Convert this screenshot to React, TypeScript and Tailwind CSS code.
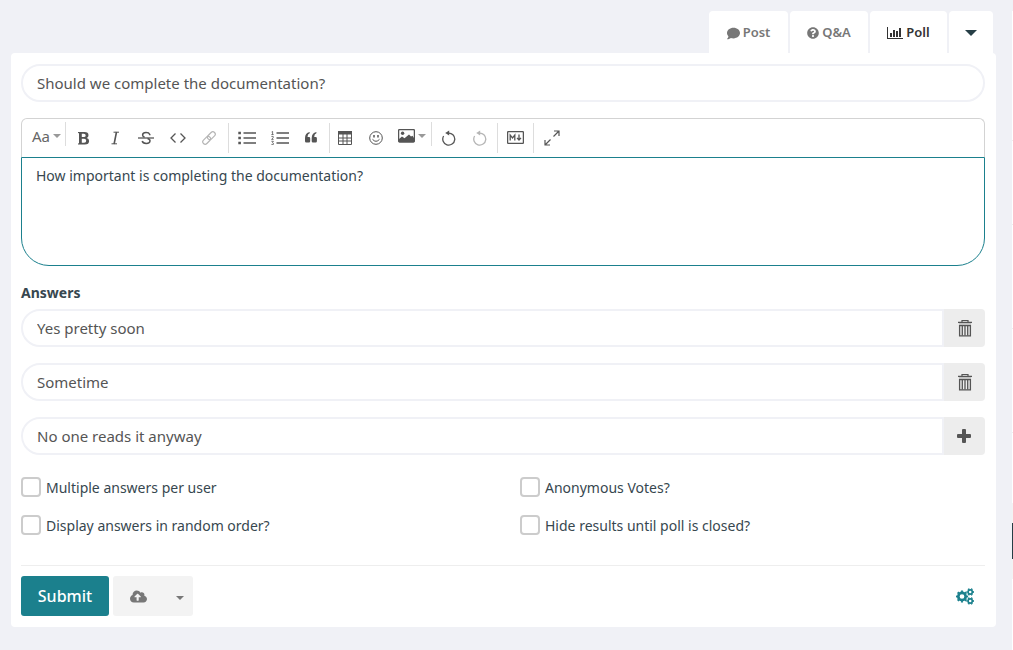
import React, { useState } from "react";
import { FaComment, FaQuestionCircle, FaCloudUploadAlt } from "react-icons/fa";

function Sep({ short = false }: { short?: boolean }) {
  return <span className={short ? "mb-2 h-6 w-px shrink-0 bg-[#ddd]" : "h-[30px] w-px shrink-0 bg-[#ddd]"} />;
}

function Caret() {
  return <span className="border-x-4 border-t-4 border-x-transparent border-t-[#999]" />;
}

function Tool({ label, children, disabled }: { label: string; children: React.ReactNode; disabled?: boolean }) {
  return (
    <button
      type="button"
      aria-label={label}
      disabled={disabled}
      className="flex h-7 w-[31px] shrink-0 items-center justify-center text-[#555] disabled:text-[#b5b5b5]"
    >
      {children}
    </button>
  );
}

const stroke = { fill: "none", stroke: "currentColor", strokeWidth: 1.3 };

function BarChart() {
  return (
    <svg width="16" height="14" viewBox="0 0 16 14" fill="currentColor" aria-hidden="true">
      <path d="M0 1h1v11h15v1H0zM3 7h2v4H3zM6 4h2v7H6zM9 5h2v6H9zM12 2h2v9h-2z" />
    </svg>
  );
}

function Trash() {
  return (
    <svg width="16" height="18" viewBox="0 0 16 18" aria-hidden="true">
      <path d="M5 3.5V1.5h6v2" fill="none" stroke="#555" strokeWidth="1.2" />
      <path d="M1 3.4h14" stroke="#555" strokeWidth="1.3" />
      <path d="M2 4h12v2H2z" fill="#c2c2c2" />
      <path d="M2.6 6.6h10.8v10.3H2.6z" fill="none" stroke="#555" strokeWidth="1.3" />
      <path d="M5.3 7v9.5M8 7v9.5M10.7 7v9.5" stroke="#555" strokeWidth="1.3" />
    </svg>
  );
}

function Plus() {
  return (
    <svg width="15" height="14" viewBox="0 0 15 14" fill="#555" aria-hidden="true">
      <path d="M6 0h2q1 0 1 1v4h4q1 0 1 1v2q0 1-1 1H9v4q0 1-1 1H6q-1 0-1-1V9H1q-1 0-1-1V6q0-1 1-1h4V1q0-1 1-1z" />
    </svg>
  );
}

function Gears() {
  return (
    <svg width="19" height="18" viewBox="0 0 19 18" fill="none" stroke="currentColor" aria-hidden="true">
      <circle cx="6" cy="9.500" r="3.700" strokeWidth="2.700" />
      <circle cx="6" cy="9.500" r="5.300" strokeWidth="1.600" pathLength="16" strokeDasharray="1 1" strokeDashoffset=".5" />
      <circle cx="14.200" cy="5" r="2.100" strokeWidth="1.700" />
      <circle cx="14.200" cy="5" r="3.200" strokeWidth="1.100" pathLength="12" strokeDasharray="1 1" strokeDashoffset=".5" />
      <circle cx="14.200" cy="14" r="2.100" strokeWidth="1.700" />
      <circle cx="14.200" cy="14" r="3.200" strokeWidth="1.100" pathLength="12" strokeDasharray="1 1" strokeDashoffset=".5" />
    </svg>
  );
}

function Rewind() {
  return (
    <svg width="16" height="16" viewBox="0 0 16 16" {...stroke} aria-hidden="true">
      <path d="M7 3.1A6 6 0 1 1 2.6 6" />
      <path d="M4.2 3.1L8.2.4v5.2z" fill="currentColor" stroke="none" />
    </svg>
  );
}

function Toolbar() {
  return (
    <div role="toolbar" aria-label="Formatting" className="flex h-[39px] items-center rounded-t-md border border-b-0 border-[#d3d3d3] pb-px">
      <button type="button" aria-label="Text style" className="mb-1 flex w-[43px] shrink-0 items-center gap-[3px] pl-[10px] text-[15px] leading-5 text-[#666]">
        Aa <Caret />
      </button>
      <Sep short />
      <span className="w-[2px]" />
      <Tool label="Bold">
        <svg width="12" height="14" viewBox="0 0 12 14" aria-hidden="true">
          <path fillRule="evenodd" fill="currentColor" d="M0 1h6.5q4 0 4 3.2 0 2-1.8 2.7 2.4.6 2.4 3.1 0 3.5-4.3 3.5H0v-1l1-.3V2.2L0 2zM3.8 2.8v3.3h2q1.9 0 1.9-1.7 0-1.6-1.9-1.6zm0 5v3.9h2.3q2.1 0 2.1-2 0-1.9-2.1-1.9z" />
        </svg>
      </Tool>
      <Tool label="Italic">
        <svg width="10" height="14" viewBox="0 0 10 14" {...stroke} aria-hidden="true">
          <path d="M3.500 1.200H9M1.500 12.800H7" strokeWidth="1" />
          <path d="M6.500 1L4.100 13" strokeWidth="1.600" />
        </svg>
      </Tool>
      <Tool label="Strikethrough">
        <svg width="16" height="14" viewBox="0 0 16 14" {...stroke} aria-hidden="true">
          <path d="M0 7h16" />
          <path d="M11.8 4.200V3.500Q11 1.600 8 1.600 4.600 1.600 4.600 3.900q0 1.500 2 2.300M9.500 7.400q2.500.6 2.500 2.400 0 2.600-3.800 2.600-3.500 0-4-2.400" strokeWidth="1.500" />
        </svg>
      </Tool>
      <span className="w-px" />
      <Tool label="Code">
        <svg width="16" height="12" viewBox="0 0 16 12" {...stroke} aria-hidden="true">
          <path d="M5.5 1.5L1 6l4.5 4.5M10.5 1.5L15 6l-4.5 4.5" />
        </svg>
      </Tool>
      <Tool label="Link" disabled>
        <svg width="14" height="14" viewBox="0 0 14 14" {...stroke} strokeWidth="1.2" aria-hidden="true">
          <g transform="rotate(-45 7 7)">
            <rect x="-.8" y="4.6" width="9" height="4.800" rx="2.400" />
            <rect x="5.800" y="4.600" width="9" height="4.800" rx="2.400" />
          </g>
        </svg>
      </Tool>
      <span className="w-1" />
      <Sep />
      <span className="w-[2px]" />
      <Tool label="Bullet list">
        <svg width="18" height="14" viewBox="0 0 18 14" {...stroke} aria-hidden="true">
          <path d="M5.5 2H18M5.5 7H18M5.5 12H18" />
          <path d="M.3 2h2.6M.3 7h2.6M.3 12h2.6" strokeWidth="2.6" />
        </svg>
      </Tool>
      <span className="w-[2px]" />
      <Tool label="Numbered list">
        <svg width="18" height="14" viewBox="0 0 18 14" {...stroke} aria-hidden="true">
          <path d="M5.5 2H18M5.5 7H18M5.5 12H18" />
          <path d="M.6 1l1-.6v3M.4 3.5h2.2M.4 5.4h1.8v1.3l-1.6 1.7h2M.4 10.3h2L1.5 11.5l.9.7v1.2h-2" strokeWidth=".8" />
        </svg>
      </Tool>
      <Tool label="Quote">
        <svg width="12" height="11" viewBox="0 0 12 11" fill="currentColor" aria-hidden="true">
          <path d="M4.7 0v1.2Q2.5 2 2.5 5H4q1.2 0 1.2 1.2v3Q5.200 10.500 4 10.500H1.300Q0 10.500 0 9.200V6Q0 .8 4.700 0zM11.400 0v1.200Q9.200 2 9.200 5h1.500q1.200 0 1.200 1.200v3q0 1.300-1.200 1.300H8q-1.300 0-1.300-1.300V6Q6.700.8 11.400 0z" />
        </svg>
      </Tool>
      <span className="w-[3px]" />
      <Sep />
      <Tool label="Table">
        <svg width="16" height="14" viewBox="0 0 16 14" {...stroke} strokeWidth="1" aria-hidden="true">
          <path d="M.5 1.500h13v12H.5zM0 7h14M0 10h14M5 3v10M9 3v10" />
          <path d="M0 0h14v3.500H0z" fill="currentColor" stroke="none" />
        </svg>
      </Tool>
      <Tool label="Emoji">
        <svg width="16" height="14" viewBox="0 0 16 14" {...stroke} strokeWidth="1" aria-hidden="true">
          <circle cx="7" cy="7" r="6.300" />
          <path d="M3.500 8.300q3.500 4 7 0" />
          <path d="M5 4v2.500M9 4v2.500" strokeWidth="1.500" />
        </svg>
      </Tool>
      <button type="button" aria-label="Insert image" className="mb-1 ml-[6px] flex shrink-0 items-center gap-[3px] text-[#555]">
        <svg width="17" height="14" viewBox="0 0 17 14" aria-hidden="true">
          <rect x=".6" y=".6" width="15.800" height="12.400" rx="1" {...stroke} />
          <circle cx="4.600" cy="4.200" r="1.700" fill="currentColor" />
          <path d="M1 13v-3l3-2.500 2.500 1.800L11 5.500l2 2 1.500-.8L16 9v4z" fill="currentColor" />
        </svg>
        <Caret />
      </button>
      <span className="w-[5px]" />
      <Sep short />
      <span className="w-px" />
      <Tool label="Undo"><Rewind /></Tool>
      <Tool label="Redo" disabled><Rewind /></Tool>
      <span className="w-[2px]" />
      <Sep />
      <span className="w-[2px]" />
      <Tool label="Markdown">
        <svg width="17" height="13" viewBox="0 0 17 13" {...stroke} aria-hidden="true">
          <rect x=".6" y=".6" width="15.800" height="11.800" rx="1" />
          <path d="M3.200 9.500v-5.500l2.300 2.900L7.800 4v5.500M12 3.500v5.500M10 6.900L12 9l2-2.100" strokeWidth="1.300" />
        </svg>
      </Tool>
      <span className="w-[2px]" />
      <Sep />
      <span className="w-[2px]" />
      <Tool label="Full screen">
        <svg width="16" height="16" viewBox="0 0 16 16" {...stroke} strokeWidth="1.200" aria-hidden="true">
          <path d="M9.500 6.500L15 1M10 1h5v5M6.500 9.500L1 15M1 10v5h5" />
        </svg>
      </Tool>
    </div>
  );
}

function Answer({ value, last = false, label }: { value: string; last?: boolean; label: string }) {
  return (
    <div className="flex h-[38px] w-full">
      <input
        aria-label={label}
        defaultValue={value}
        className="min-w-0 flex-1 rounded-l-full border-2 border-[#f0f1f6] bg-white px-[14px] text-[15px] text-[#555] outline-none"
      />
      <button
        type="button"
        aria-label={last ? "Add answer" : "Remove answer"}
        className="flex w-[41px] shrink-0 items-center justify-center rounded-r bg-[#ededed]"
      >
        {last ? <Plus /> : <Trash />}
      </button>
    </div>
  );
}

function Check({ label }: { label: string }) {
  const [on, setOn] = useState(false);
  return (
    <label className="flex h-5 items-start gap-[5px] text-sm leading-[22px] text-[#37474f]">
      <input
        type="checkbox"
        checked={on}
        onChange={() => setOn(!on)}
        className="size-5 shrink-0 appearance-none rounded border-2 border-[#ccc] bg-white checked:border-[#1b808d] checked:bg-[#1b808d]"
      />
      {label}
    </label>
  );
}

const tab = "flex h-[42px] items-center justify-center gap-[3px] rounded-t bg-white pt-0.5 text-[13px] font-semibold";

export default function App() {
  return (
    <div className="flex min-h-screen bg-[#f0f1f6] pt-[11px] font-['Noto_Sans',sans-serif] text-[#37474f]">
      <main className="ml-[11px] mr-4 min-w-0 flex-1">
        <nav aria-label="Content type" className="mr-[3px] flex justify-end gap-[2px]">
          <button type="button" className={`${tab} w-[79px] text-[#777]`}><FaComment size={13} />Post</button>
          <button type="button" className={`${tab} w-[78px] text-[#777]`}><FaQuestionCircle size={12} />Q&amp;A</button>
          <button type="button" className={`${tab} w-[77px] text-[#333]`}><BarChart />Poll</button>
          <button type="button" aria-label="More types" className={`${tab} w-11`}>
            <span className="border-x-6 border-t-6 border-x-transparent border-t-[#263e46]" />
          </button>
        </nav>
        <form onSubmit={(e) => e.preventDefault()} className="rounded bg-white py-[11px] pl-[10px] pr-[11px]">
          <input
            aria-label="Question"
            defaultValue="Should we complete the documentation?"
            className="block h-[38px] w-full rounded-full border-2 border-[#f0f1f6] px-[14px] text-[15px] text-[#555] outline-none"
          />
          <div className="mt-4">
            <Toolbar />
            <textarea
              aria-label="Description"
              defaultValue="How important is completing the documentation?"
              className="block h-[109px] w-full resize-none rounded-b-[28px] border border-[#1b808d] px-[14px] py-[7px] text-sm leading-[21px] text-[#37474f] outline-none"
            />
          </div>
          <h2 className="mt-[17px] text-sm font-bold leading-5">Answers</h2>
          <div className="mt-[6px] flex flex-col gap-4">
            <Answer label="Answer 1" value="Yes pretty soon" />
            <Answer label="Answer 2" value="Sometime" />
            <Answer label="Answer 3" value="No one reads it anyway" last />
          </div>
          <div className="mt-[22px] grid grid-cols-2 gap-x-[34px] gap-y-[18px]">
            <Check label="Multiple answers per user" />
            <Check label="Anonymous Votes?" />
            <Check label="Display answers in random order?" />
            <Check label="Hide results until poll is closed?" />
          </div>
          <hr className="mt-[30px] border-[#eee]" />
          <div className="mt-[10px] flex h-10 items-center">
            <button type="submit" className="h-10 w-[88px] rounded-[3px] bg-[#1b808d] text-base font-medium text-white">Submit</button>
            <div className="ml-1 flex h-10 w-20 rounded-[3px] bg-[#f3f3f3]">
              <button type="button" aria-label="Upload file" className="flex w-[50px] items-center justify-center text-[#777]"><FaCloudUploadAlt size={17} /></button>
              <button type="button" aria-label="Upload options" className="flex flex-1 items-center justify-center pl-1 pt-1">
                <span className="border-x-4 border-t-4 border-x-transparent border-t-[#777]" />
              </button>
            </div>
            <button type="button" aria-label="Settings" className="ml-auto mr-[10px] text-[#1b808d]"><Gears /></button>
          </div>
        </form>
      </main>
      <aside className="flex w-px shrink-0 flex-col bg-white">
        <div className="h-[130px] border-b border-[#eee]" />
        <div className="h-[84px] border-b border-[#eee]" />
        <div className="h-[104px] border-b border-[#eee]" />
        <div className="h-[104px] border-b border-[#eee]" />
        <div className="h-[70px]" />
        <div className="bg-[#f3f3f3] py-5">
          <div className="h-9 bg-[#263e46]" />
        </div>
      </aside>
    </div>
  );
}
